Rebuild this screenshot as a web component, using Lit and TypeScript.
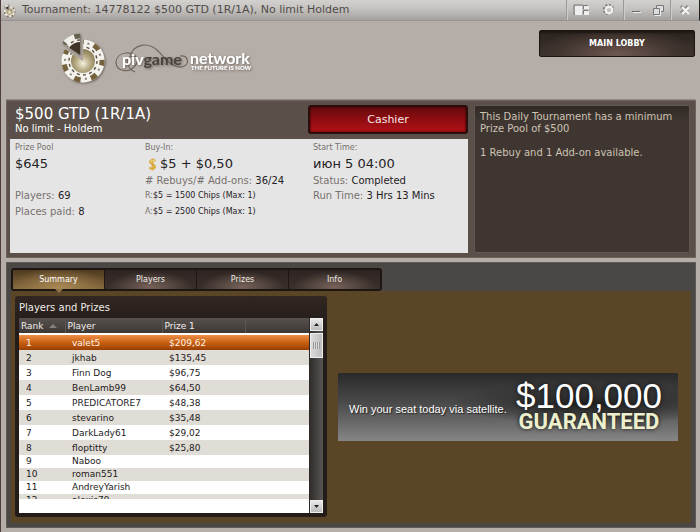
import { LitElement, html, css, svg } from "lit";
import { customElement, state } from "lit/decorators.js";
import { classMap } from "lit/directives/class-map.js";

interface Row {
  rank: number;
  player: string;
  prize: string;
}

const ROWS: Row[] = [
  { rank: 1, player: "valet5", prize: "$209,62" },
  { rank: 2, player: "jkhab", prize: "$135,45" },
  { rank: 3, player: "Finn Dog", prize: "$96,75" },
  { rank: 4, player: "BenLamb99", prize: "$64,50" },
  { rank: 5, player: "PREDICATORE7", prize: "$48,38" },
  { rank: 6, player: "stevarino", prize: "$35,48" },
  { rank: 7, player: "DarkLady61", prize: "$29,02" },
  { rank: 8, player: "floptitty", prize: "$25,80" },
  { rank: 9, player: "Naboo", prize: "" },
  { rank: 10, player: "roman551", prize: "" },
  { rank: 11, player: "AndreyYarish", prize: "" },
  { rank: 12, player: "alexis79", prize: "" },
];

const TABS = ["Summary", "Players", "Prizes", "Info"];

/* Poker chip with one slice pulled out, drawn around (27, 35). */
const chip = svg`
  <defs>
    <radialGradient id="gold" cx="0.5" cy="0.6" r="0.6">
      <stop offset="0" stop-color="#f4f0dc" />
      <stop offset="0.5" stop-color="#b8ac86" />
      <stop offset="1" stop-color="#857950" />
    </radialGradient>
    <clipPath id="body"><path d="M27 35 V5 H60 V62 H0 V17 Z" /></clipPath>
    <clipPath id="slice"><path d="M27 35 V5 H0 V17 Z" /></clipPath>
    <filter id="shade" x="-20%" y="-20%" width="140%" height="140%">
      <feDropShadow dx="1" dy="1" stdDeviation="1" flood-color="#4b423a" flood-opacity="0.7" />
    </filter>
  </defs>
  <g filter="url(#shade)">
    <g clip-path="url(#body)">
      <circle cx="27" cy="35" r="21.5" fill="#f4f2ed" />
      <circle cx="27" cy="35" r="19" fill="none" stroke="#75633c" stroke-width="5" stroke-dasharray="6.5 10.55" stroke-dashoffset="2" />
      <circle cx="27" cy="35" r="18" fill="none" stroke="#8b867e" stroke-width="2" stroke-dasharray="2 14.16" stroke-dashoffset="-8" />
      <circle cx="27" cy="35" r="14" fill="none" stroke="#5a4f40" stroke-width="1.4" stroke-dasharray="3 3.28" />
      <circle cx="27" cy="35" r="12" fill="url(#gold)" />
    </g>
    <g transform="translate(-3 -6)">
      <g clip-path="url(#slice)">
        <circle cx="27" cy="35" r="21.5" fill="#f0eee8" />
        <circle cx="27" cy="35" r="19" fill="none" stroke="#66644f" stroke-width="5" stroke-dasharray="6.5 10.55" stroke-dashoffset="2" />
        <circle cx="27" cy="35" r="15" fill="none" stroke="#5a4f40" stroke-width="1.4" stroke-dasharray="3 3.73" />
        <circle cx="27" cy="35" r="13" fill="#3f3425" />
      </g>
    </g>
  </g>`;

@customElement("app-root")
export class AppRoot extends LitElement {
  @state() private tab = "Summary";

  static styles = css`
    :host {
      display: flex;
      flex-direction: column;
      box-sizing: border-box;
      min-height: 100vh;
      padding-bottom: 4px;
      border-left: 1px solid #4c3d3a;
      background: #b5ada7;
      font: 10px/12px "DejaVu Sans", Verdana, sans-serif;
      color: #1c1a19;
    }
    * { box-sizing: border-box; }
    button { font-family: inherit; margin: 0; padding: 0; border: 0; cursor: pointer; }
    h1, h2, p { margin: 0; font-weight: normal; }

    .titlebar {
      display: flex;
      align-items: center;
      height: 21px;
      border-bottom: 1px solid #979391;
      border-right: 1px solid #222;
      background: linear-gradient(#d3d1ce, #c4c1be 45%, #a5a19e);
      color: #504c4a;
    }
    .titlebar .mini { width: 13px; height: 15px; margin: 0 6px 0 2px; }
    .caption { flex: 1; font-size: 11px; line-height: 20px; white-space: nowrap; }
    .tools { display: flex; align-self: stretch; align-items: center; border-left: 1px solid #9d9996; box-shadow: inset 1px 0 #cfccca; }
    .tools button { display: flex; justify-content: center; width: 28px; background: none; }
    .tools svg { width: 18px; height: 14px; }
    .tools.windows button { width: 23px; }

    .brand {
      display: flex;
      align-items: flex-start;
      justify-content: space-between;
      height: 79px;
      margin: 0 5px;
      padding: 0 0 0 50px;
      border-bottom: 1px solid #8f8884;
    }
    .logo { width: 210px; height: 66px; margin-top: 5px; }
    .lobby {
      width: 156px;
      height: 27px;
      margin-top: 9px;
      border: 1px solid #1c1512;
      border-radius: 2px;
      background: radial-gradient(ellipse at 50% 95%, #6d5850, #41352f 55%, transparent 78%), linear-gradient(#2c2420, #3a302b);
      box-shadow: inset 0 3px 2px -1px #1e1815;
      color: #fff;
      font-size: 8px;
      font-weight: bold;
    }

    .panel {
      margin: 0 4px 0 5px;
      border: 1px solid #6d645e;
      background: #5a5049;
    }
    .info { display: flex; gap: 6px; height: 158px; padding: 4px 5px 4px 3px; }
    .main { flex: 1; display: flex; flex-direction: column; }
    .head { display: flex; justify-content: space-between; height: 34px; padding-left: 5px; color: #fff; }
    .head h1 { font-size: 15px; line-height: 18px; }
    .head p { font-size: 10px; line-height: 12px; }
    .cashier {
      width: 160px;
      height: 29px;
      border: 2px solid #2a0d0c;
      border-radius: 3px;
      background: linear-gradient(#650b0d, #8b0c10 45%, #b41218);
      box-shadow: inset 0 0 3px #3c0505;
      color: #f7e9e6;
      font-size: 11px;
    }
    .facts {
      flex: 1;
      display: grid;
      grid-template-columns: 130px 168px 1fr;
      padding: 3px 0 0 5px;
      background: #e5e5e5;
      color: #77716e;
    }
    .facts h2 { font-size: 8px; line-height: 12px; }
    .facts b { font-weight: normal; color: #24211f; }
    .facts .big { display: flex; align-items: center; height: 20px; font-size: 13px; }
    .facts p { line-height: 14px; }
    .facts .line { line-height: 16px; }
    .facts .small { font-size: 8px; }
    .facts .skip { margin-top: 14px; }
    .coin { width: 9px; height: 13px; margin: 0 3px; }
    .note {
      width: 216px;
      padding: 5px;
      border: 1px solid #625852;
      border-radius: 2px;
      background: linear-gradient(#302925, #3f3632 14px);
      color: #cdc3b2;
      line-height: 12px;
    }
    .note p + p { margin-top: 12px; }

    .stage {
      flex: 1;
      display: flex;
      flex-direction: column;
      margin-top: 4px;
      padding: 5px 4px 4px;
      border-color: #5f5b59;
      background: #4a4745;
    }
    .tabs {
      display: flex;
      align-self: flex-start;
      height: 23px;
      border: 2px solid #1d1613;
      border-radius: 3px;
      background: #1d1613;
      gap: 1px;
    }
    .tab {
      position: relative;
      width: 91px;
      background: radial-gradient(ellipse at 50% 90%, #76625a, transparent 65%), linear-gradient(#2e2522, #3a302b);
      color: #f0ebe6;
      font-size: 8px;
    }
    .tab.on { background: radial-gradient(ellipse at 50% 90%, #a78754, transparent 80%), linear-gradient(#4e3a1f, #80643a); color: #fff; }
    .tab.on::after {
      content: "";
      position: absolute;
      left: 50%;
      top: 100%;
      margin-left: -4px;
      border: 4px solid transparent;
      border-top-color: #8f7448;
      border-bottom: 0;
    }
    .felt {
      flex: 1;
      display: flex;
      align-items: center;
      gap: 11px;
      padding: 5px 13px 5px 4px;
      background: #5a4526;
    }
    .prizes {
      align-self: flex-start;
      width: 312px;
      padding: 6px 4px 4px;
      border-radius: 3px;
      background: linear-gradient(#322722, #231c19 30px);
    }
    .prizes h2 { height: 16px; font-size: 10px; line-height: 12px; color: #f0ebe6; }
    .frame { display: flex; }
    .list { flex: 1; height: 195px; background: #fff; }
    .clip { height: 181px; overflow: hidden; }
    table { width: 100%; border-collapse: collapse; table-layout: fixed; font-size: 9px; line-height: 12px; }
    th {
      height: 15px;
      padding: 0 0 0 2px;
      border-right: 1px solid #5d5753;
      background: linear-gradient(#57514e, #3d3836);
      color: #f2efec;
      font-weight: normal;
      text-align: left;
    }
    th:nth-child(4) { border: 0; }
    .rank { width: 46px; }
    .name { width: 97px; }
    .won { width: 83px; }
    .arrow { display: inline-block; margin-left: 5px; border: 4px solid transparent; border-top: 0; border-bottom-color: #857f7b; vertical-align: 1px; }
    td { height: 15px; padding: 0 0 0 7px; }
    .short td { height: 13px; line-height: 11px; }
    .gap td { height: 2px; line-height: 0; }
    .alt { background: #e0dcd6; }
    .hot { background: linear-gradient(#ef8f49, #c9600f 50%, #983f05); color: #fff4e8; }
    .bar {
      display: flex;
      flex-direction: column;
      width: 14px;
      border-left: 1px solid #2d2825;
      background: linear-gradient(90deg, #302d2b, #5a5654);
    }
    .bar button { height: 13px; border: 1px solid #eee; background: linear-gradient(#e9e9e9, #bcbcbc); display: grid; place-items: center; }
    .bar svg { width: 5px; height: 3px; }
    .thumb { height: 25px; margin-top: 2px; border: 1px solid #eee; background: linear-gradient(90deg, #dadada, #bdbdbd); display: grid; place-items: center; }
    .grip { width: 7px; height: 7px; background: repeating-linear-gradient(90deg, #999 0 1px, #dedede 1px 2px); }
    .bar .down { margin-top: auto; }

    .banner {
      flex: 1;
      display: flex;
      align-items: center;
      justify-content: space-between;
      height: 68px;
      padding: 0 16px 0 11px;
      background: radial-gradient(ellipse at 75% 45%, #222 0, transparent 40%), linear-gradient(#292929, #4b4b4b 45%, #868686);
      color: #fff;
      font-family: "Liberation Sans", Arial, sans-serif;
      text-decoration: none;
      white-space: nowrap;
    }
    .pitch { font-size: 11px; line-height: 14px; margin-top: 4px; text-shadow: 1px 1px 1px #222; }
    .offer { display: flex; flex-direction: column; text-shadow: 0 0 4px #111; text-align: center; }
    .sum { font-size: 35px; line-height: 30px; }
    .sure { font: bold 22px/22px Roboto, "Liberation Sans", sans-serif; color: #eef0cd; }
  `;

  render() {
    return html`
      <header class="titlebar">
        <svg class="mini" viewBox="2 4 50 54" aria-hidden="true">${chip}</svg>
        <span class="caption">Tournament: 14778122 $500 GTD (1R/1A), No limit Holdem</span>
        <div class="tools">
          <button aria-label="Tile windows">
            <svg viewBox="0 0 18 14"><path d="M2 12V2H11" fill="none" stroke="#777" /><path d="M3 3h7v9H3zM12 3h5v3h-5zM12 8h5v4h-5z" fill="#eee" /><path d="M11.5 6V2.5H16M11.5 11V7.5H16" fill="none" stroke="#777" /></svg>
          </button>
          <button aria-label="Settings">
            <svg viewBox="0 0 18 14"><circle cx="8.5" cy="6.5" r="4.6" fill="none" stroke="#777" stroke-width="2" stroke-dasharray="2 1.6" /><circle cx="9" cy="7" r="3.3" fill="none" stroke="#eee" stroke-width="2.4" /></svg>
          </button>
        </div>
        <div class="tools windows">
          <button aria-label="Minimize">
            <svg viewBox="0 0 18 14"><path d="M5 8.5h8" stroke="#666" /><path d="M6 9.5h8" stroke="#eee" /></svg>
          </button>
          <button aria-label="Restore">
            <svg viewBox="0 0 18 14"><path d="M6.5 2.5h7v6h-7z" fill="#ddd" stroke="#777" /><path d="M3.5 5.5h6v6h-6z" fill="#ddd" stroke="#777" /><path d="M4.5 12.5h6v-6" fill="none" stroke="#eee" /></svg>
          </button>
        </div>
        <div class="tools">
          <button aria-label="Close">
            <svg viewBox="0 0 18 14"><path d="M5 3l7 7M12 3l-7 7" stroke="#888" stroke-width="3" /><path d="M6 4l7 7M13 4l-7 7" stroke="#f2f2f2" stroke-width="2.4" /></svg>
          </button>
        </div>
      </header>

      <div class="brand">
        <svg class="logo" viewBox="0 0 210 66" role="img" aria-label="pivgame network">
          ${chip}
          <g fill="none" stroke="#6f6661" stroke-width="1.2">
            <path d="M81 33c-3-9-20-8-21 3 0 9 11 11 17 6 6-5 6-13-1-12-7 2-6 12 3 16" />
            <path d="M74 31c3-13 18-16 28-6 8 8 14 17 24 16 8-2 7-12-2-11" />
          </g>
          <g font-family="Lato, sans-serif" font-weight="bold" font-size="16" filter="url(#shade)">
            <text x="66" y="39" fill="#fff">piv<tspan fill="#4a4340">game</tspan></text>
            <text x="134" y="38" fill="#fff">network</text>
            <text x="135" y="44" fill="#fff" font-size="6">THE FUTURE IS NOW</text>
          </g>
        </svg>
        <button class="lobby">MAIN LOBBY</button>
      </div>

      <section class="panel info">
        <div class="main">
          <div class="head">
            <div>
              <h1>$500 GTD (1R/1A)</h1>
              <p>No limit - Holdem</p>
            </div>
            <button class="cashier">Cashier</button>
          </div>
          <div class="facts">
            <div>
              <h2>Prize Pool</h2>
              <div class="big"><b>$645</b></div>
              <p class="line skip">Players: <b>69</b></p>
              <p class="line">Places paid: <b>8</b></p>
            </div>
            <div>
              <h2>Buy-In:</h2>
              <div class="big">
                <svg class="coin" viewBox="0 0 9 13" aria-hidden="true"><path d="M7.5 3.2C6 1.5 2 1.7 2 4c0 2.5 5 2 5 4.7 0 2.3-4 2.6-5.7.8M4.5 0.5v12" fill="none" stroke="#d9a93c" stroke-width="1.9" /><path d="M7 3C5.5 1.8 2.8 2.2 2.7 4" fill="none" stroke="#f7df8d" /></svg>
                <b>$5 + $0,50</b>
              </div>
              <p># Rebuys/# Add-ons: <b>36/24</b></p>
              <p class="line small">R:<b>$5 = 1500 Chips (Max: 1)</b></p>
              <p class="line small">A:<b>$5 = 2500 Chips (Max: 1)</b></p>
            </div>
            <div>
              <h2>Start Time:</h2>
              <div class="big"><b>июн 5 04:00</b></div>
              <p>Status: <b>Completed</b></p>
              <p class="line">Run Time: <b>3 Hrs 13 Mins</b></p>
            </div>
          </div>
        </div>
        <div class="note">
          <p>This Daily Tournament has a minimum Prize Pool of $500</p>
          <p>1 Rebuy and 1 Add-on available.</p>
        </div>
      </section>

      <section class="panel stage">
        <nav class="tabs">
          ${TABS.map(
            (t) => html`<button class=${classMap({ tab: true, on: t === this.tab })} @click=${() => (this.tab = t)}>${t}</button>`
          )}
        </nav>
        <div class="felt">
          <div class="prizes">
            <h2>Players and Prizes</h2>
            <div class="frame">
              <div class="list">
                <div class="clip">
                  <table>
                    <thead>
                      <tr>
                        <th class="rank">Rank<span class="arrow"></span></th>
                        <th class="name">Player</th>
                        <th class="won">Prize 1</th>
                        <th></th>
                      </tr>
                    </thead>
                    <tbody>
                      <tr class="gap"><td colspan="4"></td></tr>
                      ${ROWS.map(
                        (r, i) => html`<tr class=${classMap({ hot: i === 0, alt: i % 2 === 1, short: i > 7 })}>
                          <td>${r.rank}</td><td>${r.player}</td><td>${r.prize}</td><td></td>
                        </tr>`
                      )}
                    </tbody>
                  </table>
                </div>
              </div>
              <div class="bar">
                <button aria-label="Scroll up"><svg viewBox="0 0 5 3"><path d="M0 3h5L2.5 0z" fill="#222" /></svg></button>
                <div class="thumb"><span class="grip"></span></div>
                <button class="down" aria-label="Scroll down"><svg viewBox="0 0 5 3"><path d="M0 0h5L2.5 3z" fill="#222" /></svg></button>
              </div>
            </div>
          </div>
          <a class="banner" href="#satellite">
            <span class="pitch">Win your seat today via satellite.</span>
            <span class="offer"><span class="sum">$100,000</span><span class="sure">GUARANTEED</span></span>
          </a>
        </div>
      </section>
    `;
  }
}
